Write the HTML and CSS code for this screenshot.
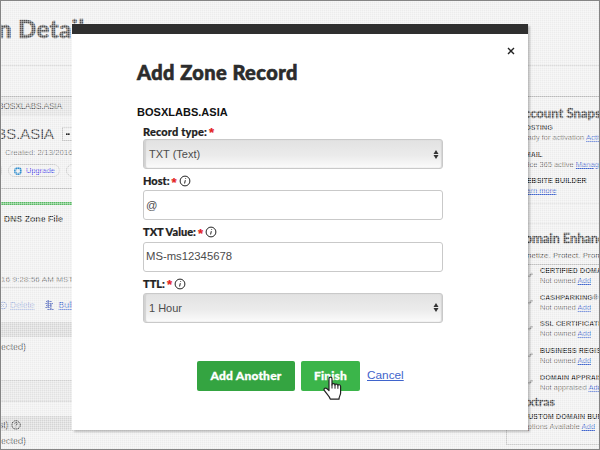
FILE: index.html
```html
<!DOCTYPE html>
<html lang="en">
<head>
<meta charset="utf-8">
<title>Add Zone Record</title>
<link rel="stylesheet" href="styles.css">
</head>
<body>
<div class="frame">
  <div class="page">
    <header class="page-head"><h1>n Detail</h1></header>
    <div class="strip"></div>
    <div class="columns">
      <section class="left">
        <div class="crumb"><span>BOSXLABS.ASIA</span></div>
        <div class="domain"><span class="domain-name">BS.ASIA</span><span class="drop"></span></div>
        <div class="created">Created: 2/13/2016</div>
        <div class="pills"><span class="pill stub"></span><span class="pill"><i class="ring"></i>Upgrade</span><span class="pill"></span></div>
        <div class="tab-line"></div>
        <div class="tab">DNS Zone File</div>
        <div class="stamp">2016 9:28:56 AM MST</div>
        <div class="tools">
          <svg class="del" width="7" height="9" viewBox="0 0 7 9"><circle cx="2" cy="4.500" r="3.500"/><path d="M0 3l3 3M3 3l-3 3"/></svg>
          <span class="off">Delete</span>
          <svg class="bulk" width="9" height="10" viewBox="0 0 9 10"><path d="M1 1.500h6M0 3.500h8M1 5.500h6M0 7.500h5M2 9.500h7M3 0v8M6 3v6"/></svg>
          <a>Bulk</a>
        </div>
        <div class="band"></div>
        <div class="sel">ected)</div>
        <div class="light-band"></div>
        <div class="space"></div>
        <div class="band host">st) <svg width="10" height="10" viewBox="0 0 10 10"><circle cx="5" cy="5" r="4.200"/><path d="M3.800 4q0-1.400 1.400-1.400T6.300 4L4.800 5.600v.6M4.500 7.500h.6"/></svg></div>
        <div class="sel last">ected)</div>
      </section>
      <section class="right">
        <h2 class="snap">Account Snapshot</h2>
        <div class="item status"><b>HOSTING</b><p>Ready for activation <a>Activate</a></p></div>
        <div class="item status"><b>EMAIL</b><p>Office 365 active <a>Manage</a></p></div>
        <div class="item status"><b>WEBSITE BUILDER</b><p><a>Learn more</a></p></div>
        <div class="rule"></div>
        <h2 class="enh">Domain Enhancements</h2>
        <p class="lead">Monetize. Protect. Promote.</p>
        <div class="item extra"><i></i><b>CERTIFIED DOMAIN</b><p>Not owned <a>Add</a></p></div>
        <div class="item extra"><i></i><b>CASHPARKING®</b><p>Not owned <a>Add</a></p></div>
        <div class="item extra"><i></i><b>SSL CERTIFICATE</b><p>Not owned <a>Add</a></p></div>
        <div class="item extra"><i></i><b>BUSINESS REGISTRATION</b><p>Not owned <a>Add</a></p></div>
        <div class="item extra"><i></i><b>DOMAIN APPRAISAL</b><p>Not appraised <a>Add</a></p></div>
        <h2 class="extras">Extras</h2>
        <div class="item bundle"><b>CUSTOM DOMAIN BUNDLE</b><p>Options Available <a>Add</a></p></div>
      </section>
    </div>
  </div>
  <div class="mesh"></div>

  <div class="modal" role="dialog">
    <div class="bar"></div>
    <div class="body">
      <svg class="close" width="8" height="8" viewBox="0 0 8 8"><path d="M1 1l6 6M7 1l-6 6"/></svg>
      <h3><span>Add Zone Record</span></h3>
      <div class="zone"><span>BOSXLABS.ASIA</span></div>
      <form class="form">
        <div class="label"><span class="t-type">Record type:</span><em>*</em></div>
        <div class="select"><span>TXT (Text)</span><svg width="6" height="9" viewBox="0 0 6 9"><path d="M3 0l2.500 4h-5zM3 9L.5 5h5z"/></svg></div>
        <div class="label"><span>Host:</span><em>*</em><svg class="info" width="12" height="12" viewBox="0 0 12 12"><circle cx="6" cy="6" r="4.900"/><path d="M6.300 5.200L5.600 8.500M6.700 3.100l-.1.700"/></svg></div>
        <div class="input"><span>@</span></div>
        <div class="label"><span>TXT Value:</span><em>*</em><svg class="info" width="12" height="12" viewBox="0 0 12 12"><circle cx="6" cy="6" r="4.900"/><path d="M6.300 5.200L5.600 8.500M6.700 3.100l-.1.700"/></svg></div>
        <div class="input"><span>MS-ms12345678</span></div>
        <div class="label"><span>TTL:</span><em>*</em><svg class="info" width="12" height="12" viewBox="0 0 12 12"><circle cx="6" cy="6" r="4.900"/><path d="M6.300 5.200L5.600 8.500M6.700 3.100l-.1.700"/></svg></div>
        <div class="select"><span>1 Hour</span><svg width="6" height="9" viewBox="0 0 6 9"><path d="M3 0l2.500 4h-5zM3 9L.5 5h5z"/></svg></div>
      </form>
      <div class="actions">
        <span class="btn another">Add Another</span>
        <span class="btn finish">Finish</span>
        <a class="cancel">Cancel</a>
      </div>
    </div>
  </div>
  <svg class="cursor" width="20" height="26" viewBox="0 0 20 26"><path d="M6 14.500V2.700C6 .5 9 .5 9 2.700V9c0-2 3-1.900 3 .2 0-1.700 2.900-1.500 2.900.5 0-1.500 2.700-1.300 2.700.8V17c0 2-1.600 3.500-1.600 6.200H7.300C6.600 20.300 3.700 18.300 1.300 14.400.3 12.500 2.600 11.400 4 12.700z"/><path class="lines" d="M9 8.500v4M12 9.200v3.500M14.900 9.800v3"/></svg>
</div>
</body>
</html>
```
FILE: styles.css
```css
* { box-sizing: border-box; }
body { margin: 0; font-family: "Liberation Sans", sans-serif; color: #4b4b4b; }
h1, h2, h3, p { margin: 0; }
a { color: #3f64cc; text-decoration: underline; }
svg { fill: none; flex: none; }
.frame { position: relative; width: 600px; height: 450px; border: 1px solid #858585; overflow: hidden; background: #ececec; }
.page { height: 448px; overflow: hidden; white-space: nowrap; }
.page-head { height: 65px; border-bottom: 1px solid #c9c9c9; padding-top: 14px; }
.page-head h1 { font: 900 24px/28px Lato, sans-serif; letter-spacing: .35px; color: #505050; margin-left: -3px; -webkit-text-stroke: .5px #505050; }
.strip { height: 31px; border-bottom: 1px solid #b9b9b9; }
.columns { display: flex; justify-content: space-between; height: 352px; }

.left { width: 72px; overflow: hidden; font-size: 8.500px; }
.crumb { height: 19px; background: #dfdfdf; line-height: 18px; }
.crumb span { margin-left: -3px; letter-spacing: -.25px; color: #505050; }
.domain { height: 31px; display: flex; align-items: center; justify-content: space-between; padding-top: 4px; }
.domain-name { font-size: 15.500px; margin-left: -5px; letter-spacing: -.35px; color: #404040; }
.drop { width: 11px; height: 14px; border: 1px solid #c4c4c4; border-right: 0; display: flex; align-items: center; justify-content: center; }
.drop::after { content: ""; width: 4px; height: 2px; background: #222; }
.created { height: 12px; line-height: 11px; padding-left: 4px; font-size: 8px; color: #7a7a7a; letter-spacing: -.05px; }
.pills { height: 30px; border-bottom: 1px solid #bdbdbd; display: flex; gap: 6px; padding-top: 5px; }
.pill { flex: none; width: 52px; height: 13px; border: 1px solid #c9c9c9; border-radius: 7px; display: flex; align-items: center; gap: 4px; padding-left: 5px; color: #3b3be8; font-size: 7.500px; }
.pill.stub { width: 8px; margin-left: -7px; }
.ring { width: 8px; height: 8px; border: 2px solid #2f8ccb; border-radius: 50%; }
.tab-line { height: 3px; margin: 13px 0 0; background: #58b863; }
.tab { height: 69px; padding: 8px 0 0 3px; font-weight: bold; font-size: 8.700px; line-height: 12px; color: #303030; }
.stamp { height: 14px; border-bottom: 1px solid #bdbdbd; line-height: 11px; font-size: 8px; color: #6c6c6c; margin-left: -9px; letter-spacing: .1px; }
.tools { height: 34px; display: flex; align-items: center; color: #9badda; font-size: 8.500px; }
.tools svg { stroke: #a0b0db; }
.tools .off { margin-left: 2px; width: 27px; text-decoration: underline; color: #a0b0db; }
.tools .bulk { margin: 0 5px 0 10px; stroke: #3048ae; }
.band { height: 15px; background: #d4d4d4; }
.sel { height: 43px; line-height: 20px; font-size: 9px; color: #484848; }
.light-band { height: 22px; background: #e1e1e1; border-top: 1px solid #d0d0d0; border-bottom: 1px solid #c6c6c6; }
.space { height: 14px; }
.host { display: flex; align-items: center; gap: 3px; color: #404040; padding-top: 2px; margin-left: -2px; }
.host svg { stroke: #404040; }
.last { height: 17px; }

.right { width: 93px; border-left: 1px solid #c8c8c8; height: 348px; border-bottom: 1px solid #cccccc; padding-left: 8px; font-size: 7.500px; overflow: hidden; }
.right h2 { font: 900 13px/16px Lato, sans-serif; color: #444; -webkit-text-stroke: .3px #444; }
.right .snap { margin: 8px 0 2px; }
.item { height: 26.700px; }
.item b { display: block; line-height: 10px; height: 10px; font-size: 7px; font-weight: bold; color: #303030; letter-spacing: .12px; }
.item p { line-height: 10px; color: #6c6c6c; }
.status b { margin-left: 5px; }
.status p { margin-left: 3px; }
.rule { height: 21px; border-top: 1px solid #d9d9d9; border-bottom: 1px solid #d9d9d9; }
.right .enh { letter-spacing: -.15px; margin: 6px 0 0; }
.lead { font-size: 8px; line-height: 12px; margin: 4px 0 1px 1px; padding-bottom: 2px; border-bottom: 1px solid #c0c0c0; color: #444; }
.extra { display: grid; grid-template: 10px 10px / 25px 1fr; }
.extra i { grid-row: 1 / 3; justify-self: end; width: 5px; height: 2px; margin: 8px 7px 0 0; background: #999; transform: rotate(-45deg); }
.right .extras { font-size: 12px; margin: -6px 0 0 6px; height: 18px; }
.bundle { margin-left: 8px; }
.bundle p { margin-left: -1px; }

.mesh { position: absolute; inset: 0; background-image: linear-gradient(90deg, rgba(255,255,255,.35) 1px, transparent 1px), linear-gradient(rgba(255,255,255,.35) 1px, transparent 1px); background-size: 2px 2px; }

.modal { position: absolute; left: 71px; top: 23px; width: 456px; height: 406px; background: #fff; box-shadow: 2px 2px 2px rgba(0,0,0,.22); }
.bar { height: 10px; background: #2f2f2f; }
.body { padding-left: 65px; display: flex; flex-direction: column; }
.close { align-self: flex-end; margin: 13px 13px 0 0; stroke: #222; stroke-width: 1.400; }
.body h3 { margin-top: 4px; height: 26px; font: 900 20px/26px Lato, sans-serif; color: #2c2c2c; white-space: nowrap; }
.body h3 span { letter-spacing: .43px; -webkit-text-stroke: .6px #2c2c2c; }
.zone { margin-top: 20px; height: 14px; font: bold 11px/14px "Liberation Sans", sans-serif; color: #111; letter-spacing: .02px; }
.form { margin-left: 6px; width: 300px; padding-top: 5px; }
.label { height: 21.300px; display: flex; align-items: center; font: 900 11px/16px Lato, sans-serif; color: #222; padding: 3px 0 0 0; -webkit-text-stroke: .2px; }
.form .label:first-child { height: 15px; padding-top: 0; }
.t-type { letter-spacing: .15px; }
.label em { font: bold 13px/14px "Liberation Sans", sans-serif; color: #e32222; margin: 3px 0 0 2px; width: 6px; }
.info { stroke: #222; stroke-width: 1; margin-left: 1px; }
.select, .input { height: 30px; border: 1px solid #c9c9c9; border-radius: 3px; font-size: 11.300px; color: #4c4c4c; display: flex; align-items: center; padding: 0 0 1px 2px; background: #fff; white-space: nowrap; }
.select { justify-content: space-between; padding: 0 3px 0 5px; font-size: 11px; background: linear-gradient(#e2e2e2, #ebebeb 55%, #fbfbfb); box-shadow: inset 2px 0 1px #d2d2d2, inset -1px 0 1px #d5d5d5; }
.select svg { fill: #333; }
.actions { display: flex; align-items: center; margin: 38px 0 0 60px; }
.btn { height: 30px; border-radius: 2px; background: #34a441; color: #fff; font: 900 12px/29px Lato, sans-serif; text-align: center; white-space: nowrap; letter-spacing: .2px; -webkit-text-stroke: .3px #fff; }
.another { width: 98px; margin-right: 6px; }
.finish { width: 59px; background: #3bb54a; margin-right: 7px; }
.cancel { font-size: 11.800px; line-height: 16px; margin-top: -2px; }
.cursor { position: absolute; left: 322px; top: 375px; fill: #fff; stroke: #222; stroke-width: 1.200; stroke-linejoin: round; }
.cursor .lines { stroke-width: 1; }
```
